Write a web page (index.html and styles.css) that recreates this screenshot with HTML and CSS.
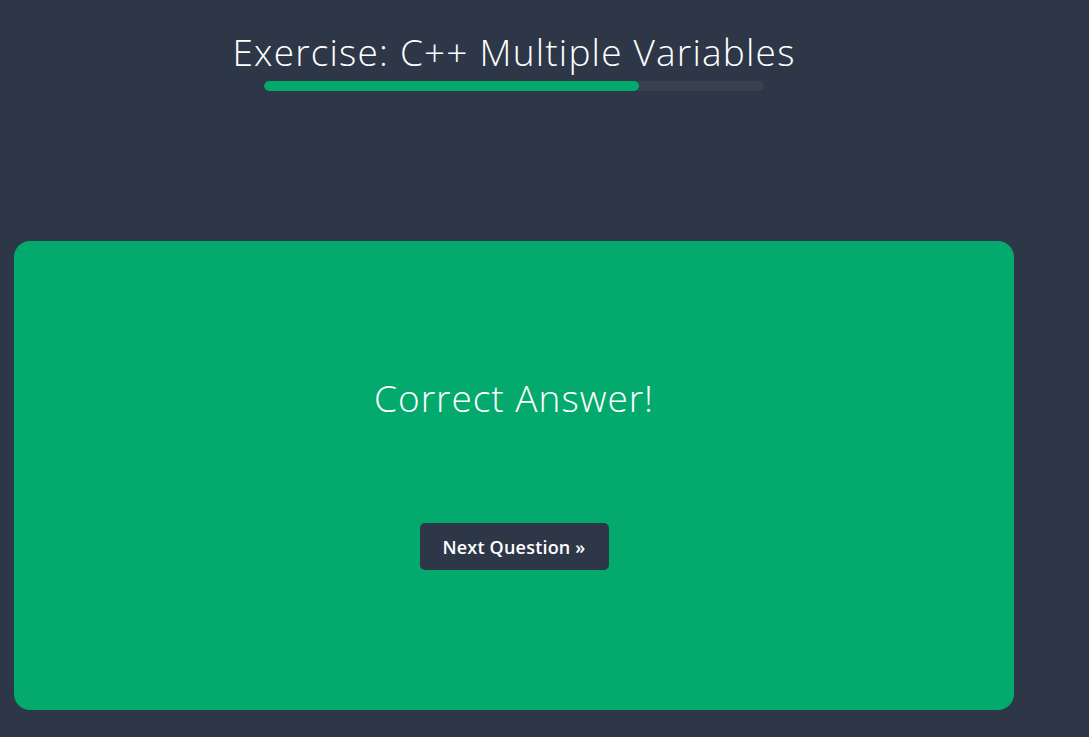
FILE: index.html
```html
<!DOCTYPE html>
<html>
<head>
<meta charset="utf-8">
<link rel="stylesheet" href="styles.css">
</head>
<body>
<div class="page">
  <header class="head">
    <h1 class="title">Exercise: C++ Multiple Variables</h1>
    <div class="progress"><div class="progress-fill" style="width:75%"></div></div>
  </header>
  <section class="card">
    <h2 class="result">Correct Answer!</h2>
    <button class="next">Next Question »</button>
  </section>
</div>
</body>
</html>
```
FILE: styles.css
```css
html, body {
  margin: 0;
  padding: 0;
  background: #2d3748;
  height: 100%;
}
body {
  font-family: "Open Sans", "Noto Sans", sans-serif;
  color: #fff;
}
.page {
  width: 1000px;
  padding-left: 14px;
}
.head {
  display: flex;
  flex-direction: column;
  align-items: center;
  padding-top: 28px;
}
.title {
  margin: 0;
  font-weight: 300;
  font-size: 37px;
  line-height: 48px;
  letter-spacing: 1.2px;
  white-space: nowrap;
}
.progress {
  margin-top: 5px;
  width: 500px;
  height: 10px;
  border-radius: 5px;
  background: #38424f;
  overflow: hidden;
}
.progress-fill {
  height: 100%;
  background: #04aa6d;
  border-radius: 5px;
}
.card {
  margin-top: 150px;
  height: 469px;
  background: #04aa6d;
  border-radius: 16px;
  display: flex;
  flex-direction: column;
  align-items: center;
  box-sizing: border-box;
  padding-top: 132px;
}
.result {
  margin: 0;
  font-weight: 300;
  font-size: 37px;
  line-height: 50px;
  letter-spacing: 1px;
}
.next {
  margin-top: 100px;
  width: 189px;
  height: 47px;
  border: none;
  border-radius: 5px;
  background: #2d3748;
  color: #fff;
  font-family: "Open Sans", "Noto Sans", sans-serif;
  font-weight: 600;
  font-size: 18px;
  letter-spacing: 0.2px;
}
```
